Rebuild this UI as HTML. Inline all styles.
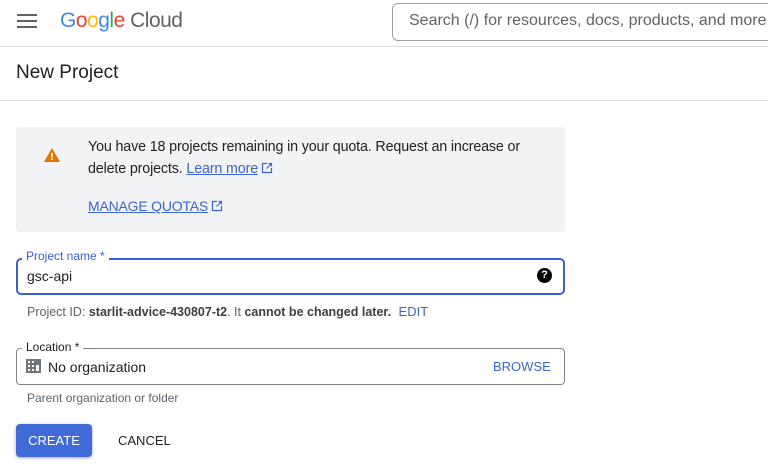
<!DOCTYPE html>
<html><head><style>
*{margin:0;padding:0;box-sizing:border-box}
body{width:768px;height:475px;overflow:hidden;background:#fff;font-family:"Liberation Sans",sans-serif;color:#202124;position:relative}
.a{position:absolute;white-space:nowrap}
.blue{color:#3b66d2}
.ext{display:inline-block;vertical-align:-1px;margin-left:3px}
</style></head><body>
<div class="a" style="left:0;top:46px;width:768px;height:1px;background:#dadce0"></div>
<div class="a" style="left:17px;top:14px;width:20px;height:2px;background:#5f6368;box-shadow:0 6px 0 #5f6368,0 12px 0 #5f6368"></div>
<div class="a" style="left:60px;top:9px;font-size:21px;letter-spacing:-0.5px"><span style="color:#4285f4">G</span><span style="color:#ea4335">o</span><span style="color:#fbbc05">o</span><span style="color:#4285f4">g</span><span style="color:#34a853">l</span><span style="color:#ea4335">e</span> <span style="color:#5f6368">Cloud</span></div>
<div class="a" style="left:392px;top:3px;width:400px;height:38px;border:1px solid #9aa0a6;border-radius:6px"></div>
<div class="a" style="left:409px;top:12px;font-size:16px;color:#5f6368">Search (/) for resources, docs, products, and more</div>
<div class="a" style="left:16px;top:62px;font-size:19px">New Project</div>
<div class="a" style="left:0;top:100px;width:768px;height:1px;background:#dadce0"></div>
<div class="a" style="left:16px;top:127px;width:549px;height:105px;background:#f1f3f4;border-radius:3px"></div>
<svg class="a" style="left:44px;top:148px" width="16" height="14" viewBox="0 0 16 14"><path d="M8 0L16 14H0Z" fill="#e37400"/><rect x="7.2" y="5" width="1.6" height="4.5" fill="#fff"/><rect x="7.2" y="10.5" width="1.6" height="1.6" fill="#fff"/></svg>
<div class="a" style="left:88px;top:136px;font-size:14.3px;line-height:22px;letter-spacing:-0.15px">You have 18 projects remaining in your quota. Request an increase or<br>delete projects. <span class="blue" style="text-decoration:underline">Learn more</span><svg class="ext" width="12" height="12" viewBox="0 0 12 12"><path d="M6 1.5H1.5V10.5H10.5V6M7.5 1.5H10.5V4.5M10.5 1.5L5.5 6.5" fill="none" stroke="#3b66d2" stroke-width="1.2"/></svg></div>
<div class="a blue" style="left:88px;top:198px;font-size:14px;text-decoration:underline;letter-spacing:-0.2px">MANAGE QUOTAS<svg class="ext" width="12" height="12" viewBox="0 0 12 12"><path d="M6 1.5H1.5V10.5H10.5V6M7.5 1.5H10.5V4.5M10.5 1.5L5.5 6.5" fill="none" stroke="#3b66d2" stroke-width="1.2"/></svg></div>
<div class="a" style="left:16px;top:258px;width:549px;height:37px;border:2px solid #3b5fd6;border-radius:5px"></div>
<div class="a" style="left:22px;top:249px;background:#fff;padding:0 4px;font-size:12px;color:#3b5fd6">Project name *</div>
<div class="a" style="left:27px;top:268px;font-size:14px">gsc-api</div>
<div class="a" style="left:537px;top:268px;width:15px;height:15px;border-radius:50%;background:#000;color:#fff;font-size:11px;font-weight:bold;text-align:center;line-height:15px">?</div>
<div class="a" style="left:27px;top:304px;font-size:12.5px;color:#5f6368">Project ID: <b style="color:#3c4043">starlit-advice-430807-t2</b>. It <b style="color:#3c4043">cannot be changed later.</b> <span class="blue" style="margin-left:4px;font-size:13px">EDIT</span></div>
<div class="a" style="left:16px;top:348px;width:549px;height:37px;border:1px solid #80868b;border-radius:4px"></div>
<div class="a" style="left:22px;top:340px;background:#fff;padding:0 4px;font-size:12px">Location *</div>
<svg class="a" style="left:26px;top:359px" width="15" height="14" viewBox="0 0 15 14"><rect x="0" y="0" width="15" height="14" fill="#70757a"/><g fill="#fff"><rect x="2" y="2" width="2" height="2"/><rect x="6" y="2" width="2" height="2"/><rect x="2" y="6" width="2" height="2"/><rect x="6" y="6" width="2" height="2"/><rect x="2" y="10" width="2" height="2"/><rect x="6" y="10" width="2" height="2"/><rect x="10" y="6" width="3" height="6"/></g></svg>
<div class="a" style="left:48px;top:359px;font-size:14px">No organization</div>
<div class="a blue" style="left:493px;top:359px;font-size:13px">BROWSE</div>
<div class="a" style="left:27px;top:391px;font-size:12px;color:#5f6368">Parent organization or folder</div>
<div class="a" style="left:16px;top:424px;width:76px;height:33px;background:#3f6ad8;border-radius:4px;box-shadow:0 1px 3px rgba(0,0,0,.35);color:#fff;font-size:13px;text-align:center;line-height:33px">CREATE</div>
<div class="a" style="left:118px;top:433px;font-size:13px">CANCEL</div>
</body></html>
